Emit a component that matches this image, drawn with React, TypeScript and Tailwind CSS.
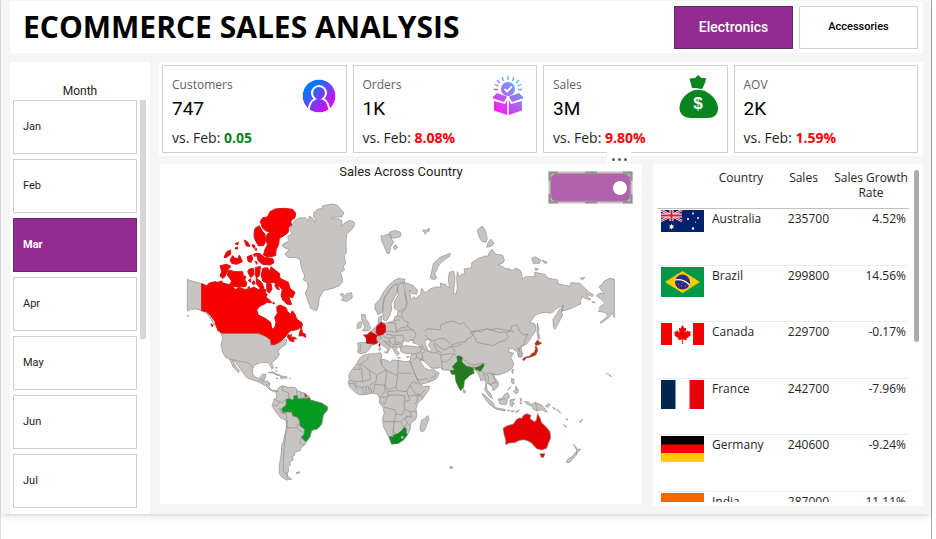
import React from "react";

type Part = [region: keyof typeof regions, points: string];

/* Offsets of the map regions inside the world drawing. */
const regions = {
  arctic: [0, 0],
  europe: [450, 0],
  siberia: [870, -135],
  america: [0, 405],
  africa: [450, 405],
  pacific: [870, 405],
};

function outline(parts: Part[], close = true) {
  const points = parts.flatMap(([region, text]) => {
    const [dx, dy] = regions[region];
    return text.split(" ").map((pair) => {
      const [x, y] = pair.split(",").map(Number);
      return `${x + dx},${y + dy}`;
    });
  });
  return `M${points.join("L")}${close ? "Z" : ""}`;
}

function shapes(region: keyof typeof regions, list: string[], close = true) {
  return list.map((points) => outline([[region, points]], close)).join("");
}

const eurasia = outline([
  ["europe", "222,262 232,265 250,272 262,285 260,298 245,295 238,285 240,298 243,314 252,305 255,312 272,298 275,280 282,290 288,292 300,282 320,275 332,278 330,265 345,268 358,280 355,250 358,232 370,228 375,245 373,270 370,295 378,297 382,280 380,250 382,230 388,245 395,237 405,238 402,222 425,218 425,203 445,190 460,185"],
  ["siberia", "45,318 55,318 58,305 67,298 75,312 98,316 103,330 100,338 85,345 98,350 105,355 122,358 125,363 138,355 150,360 154,368 158,388 165,380 195,380 194,367 225,373 235,385 262,389 265,402 300,409 303,398 330,400 345,415 355,425 370,434 367,440 350,432 354,443 363,447 356,450 337,440 330,455 333,462 318,468 305,475 290,480 275,483 280,465 262,475 255,478 248,487 235,490 235,487 215,488 195,496 180,518 192,520 198,528 196,543 185,560 170,582 152,592"],
  ["pacific", "146,60 154,68 156,80 145,80 142,65 132,60 128,55 117,56 116,66 131,70 122,83 131,98 128,112 115,124 92,133 82,135 72,132 73,142 84,155 85,168 76,178 68,182 68,172 60,165 52,160 49,165 52,182 62,190 67,206 58,200 50,188 44,180 48,160 44,148 33,153 28,138 18,120 8,117"],
  ["africa", "430,128 395,135 365,130 358,121 340,120 331,113 315,115 303,114 290,100 275,90 270,92 277,104 285,115 298,121 308,117 328,130 318,147 300,155 275,163 268,160 258,140 250,118 244,103 240,93 242,80 246,72 225,70 213,65 210,52 224,47 240,48 260,50 272,52 262,43 248,38 252,32 240,30 235,36 225,32 218,38 217,48 205,52 198,58 208,70 202,77 195,68 185,50 170,40 160,30 165,38 184,51 180,56 174,65 170,54 155,44 147,35 138,42 122,48 118,58 108,68 92,71 83,67 85,50 82,39 95,37 111,38 108,22 100,15 113,12 122,4"],
  ["europe", "135,398 145,385 145,368 155,362 154,380 167,385 190,378 195,365 203,362 203,350 218,347 228,340 231,325 224,295 228,285"],
]);

const neutral = [
  eurasia,
  outline([
    ["arctic", "308,148 328,137 322,125 336,115 328,103 340,85 345,75 360,69 375,68 385,77 388,63 398,70 405,82 408,72 400,66 402,52 414,42 428,41 427,33 455,27"],
    ["europe", "12,28 22,31 42,54 35,66 10,67 3,71 28,72 36,78 35,95 42,85 60,76 73,82 73,93 62,107 50,117 48,145 49,175 42,182 47,205 40,215 44,225 32,232 36,248 38,260 28,272 12,279 0,282"],
    ["arctic", "430,287 418,308 415,335 410,346 402,345 392,340 384,318 376,295 384,275 383,262 370,255 374,243 365,220 360,195 350,188 325,187 314,177 328,165 308,155"],
  ]),
  shapes("arctic", [
    "22,253 35,258 50,262 65,266 65,347 45,341 35,345 30,340 25,349 22,346",
    "65,347 80,352 92,368 104,390 98,380 86,362 76,352",
    "22,362 25,360 24,365",
  ]),
  shapes("europe", [
    "30,298 38,295 43,302 50,296 65,293 67,308 50,320 34,315 40,308",
    "153,122 162,123 170,118 179,118 185,132 191,142 182,155 178,175 171,175 163,155 155,138",
    "178,112 195,106 212,112 212,124 195,130 183,127",
    "190,155 197,149 203,157 195,165",
    "277,106 288,105 298,100 298,108 290,110 286,118 282,110",
    "361,175 358,185 342,195 328,208 320,225 314,235 320,250 312,254 300,248 305,230 310,206 330,187",
    "442,105 457,93 465,105 472,130 468,142 455,138 447,125",
    "95,358 102,358 108,362 106,370 115,382 122,398 117,407 97,408 105,397 100,385 95,375",
    "82,387 90,379 96,384 92,398 82,401",
    "135,342 135,328 150,312 160,292 175,272 190,258 205,250 225,253 222,262 208,264 195,268 178,285 162,310 158,335 158,350 145,360",
    "203,268 190,270 178,286 163,310 159,335 158,352 160,375 170,377 180,360 185,342 183,325 195,305 202,292",
    "207,267 219,263 225,290 231,320 225,342 205,347 193,340 193,320 205,300 202,282",
  ]),
  shapes("siberia", [
    "50,292 53,280 62,267 72,280 65,288",
    "185,325 195,320 212,330 208,340 190,340",
    "216,330 232,337 225,341",
    "195,355 206,357 197,362",
    "330,385 345,382 338,389",
    "280,467 275,487 278,495 265,520 255,538 250,530 249,508 262,490 268,478",
    "433,388 433,503 428,490 415,504 392,520 390,518 412,499 409,488 385,484 390,478 388,472 405,460 390,445 379,438 388,430 402,431 387,410 398,402 402,393 420,385",
    "202,520 207,540 205,547 210,565 204,568 201,545",
    "365,454 376,458 371,459",
  ]),
  shapes("america", [
    "125,10 232,10 255,18 270,28 272,45 285,45 300,38 315,28 320,30 318,43 305,52 294,63 298,73 290,86 275,98 280,112 276,118 268,103 262,98 245,97 232,102 225,104 218,114 218,130 224,140 235,145 244,140 246,133 257,132 255,147 248,152 263,154 270,160 268,170 273,180 285,181 293,184 285,186 270,180 258,168 240,158 225,152 200,143 190,130 178,112 165,95 158,90 165,105 178,122 176,128 160,112 149,88 138,83 128,68 123,45 128,25 124,12",
    "288,185 297,172 308,167 325,172 345,172 355,183 375,190 387,200 392,210 410,215 425,219 442,230 442,240 430,255 425,283 412,297 395,301 390,320 378,337 374,345 364,350 362,360 343,368 345,375 337,380 340,390 329,397 332,404 325,410 325,425 320,432 325,440 335,447 320,450 308,443 298,432 298,405 304,370 305,345 310,335 318,300 320,280 318,272 300,262 285,242 276,228 282,208 290,202",
    "265,128 278,125 290,132 302,136 290,136 278,129",
    "302,138 320,140 322,144 311,145 302,145",
    "348,428 360,425 357,430 349,430",
    "288,145 294,145 291,147", "328,144 332,145 330,147",
    "286,112 292,113 289,116", "288,121 291,124 289,126",
  ]),
  shapes("africa", [
    "97,77 115,72 135,71 152,68 156,78 153,87 168,90 182,97 186,90 205,91 225,95 240,93 245,103 243,107 252,127 260,145 266,160 280,170 298,168 296,180 280,203 263,220 258,235 261,258 257,268 243,280 240,300 232,315 222,328 205,340 185,342 180,330 172,312 160,290 158,265 163,248 158,230 148,218 149,205 142,192 125,190 105,194 88,194 75,187 60,172 54,158 58,148 56,137 65,120 78,105 87,88",
    "272,285 275,270 284,267 293,256 297,268 288,290 283,302 274,305 270,298",
    "400,178 407,182 405,189 400,187",
    "147,54 152,54 151,60 147,61",
    "163,66 174,65 172,70",
    "202,82 212,84 203,84", "230,81 238,79 233,84",
    "360,410 367,410 367,415 360,415",
  ]),
  shapes("pacific", [
    "310,343 317,350 322,358 332,357 325,366 319,370 320,360",
    "318,366 322,371 310,385 298,398 289,397 292,389 308,378",
    "163,215 175,215 182,225 195,217 215,225 222,233 232,247 215,239 200,243 188,236 188,230 170,222",
    "84,207 95,205 105,192 113,188 119,200 113,208 108,224 90,222",
    "35,190 45,196 60,210 72,222 75,235 60,225 48,210",
    "75,233 90,235 106,239 105,243 78,238",
    "120,210 136,207 128,214 134,222 127,220 128,229 121,228",
    "124,145 132,148 132,162 125,158",
    "137,168 145,180 145,187 137,191 130,184 137,180",
    "125,120 130,117 128,131",
    "143,55 153,52 158,76 150,82 144,78 149,68",
    "112,240 120,241 115,243", "122,243 133,243 128,245", "136,246 148,240 143,246",
    "150,205 154,206 153,215", "113,180 122,170 117,178", "150,218 156,219 152,222",
    "226,229 236,220 241,225 233,232", "248,231 256,237 252,238", "260,237 272,249 266,244",
    "280,284 290,291 285,290", "288,264 293,270 291,270", "328,275 338,268 332,276",
    "408,129 412,132 410,133", "415,133 425,140 420,138",
  ]),
].join("");

const borders = [
  shapes("europe", [
    "220,345 214,360 222,377 235,382 232,395 250,405 256,412 258,423 245,438",
    "285,410 290,402 308,402 330,405 332,390 350,382 370,378 390,388 400,382 425,410 433,412 422,428 410,432 408,440 385,443 365,450 345,432 330,430 310,438 292,430 285,420",
    "425,410 450,405 470,402 480,405 498,400 528,405 552,410",
    "200,362 215,368", "192,376 210,375", "196,385 200,410 210,400 230,395", "175,382 198,385",
    "165,412 180,408 200,412", "170,418 195,422 218,420", "160,425 178,430 195,425 195,440 215,445",
    "178,430 180,445", "165,440 178,442", "218,420 222,432 215,440", "145,422 155,428 145,435", "140,418 145,422",
    "200,410 225,405 250,405", "192,440 195,448 212,447", "130,402 140,402 138,412",
  ], false),
  shapes("siberia", [
    "0,548 15,543 35,545 50,535 65,540 90,548 105,545 115,560 105,572 90,575 70,587 45,582 20,577 15,562 0,548",
    "108,546 120,545 125,528 140,524 150,545 162,555 175,552 165,568 162,583 150,590",
  ], false),
  shapes("america", [
    "149,88 165,90 180,95 198,96 210,102 220,115", "236,152 246,148 248,142", "250,152 246,160", "258,165 268,160",
    "308,170 308,182 325,188 327,208", "350,180 350,190 355,205", "362,187 364,203", "283,208 298,215 305,218 318,208",
    "280,225 290,228 300,215", "305,240 298,235 306,250 318,250 322,270 320,290 328,295", "318,272 322,290 316,318 312,360 310,400 310,425 322,432",
    "322,292 335,294 350,292 360,302 370,308", "350,292 355,282 360,288", "362,325 360,340 372,345", "322,430 322,445",
  ], false),
  shapes("africa", [
    "115,78 113,88 92,102 80,105", "92,102 118,120 140,135 168,120 155,105 150,85", "155,105 155,90", "70,118 90,118 90,105",
    "95,115 98,155 75,155 60,150", "118,120 122,148 98,155", "140,135 138,155 120,165", "168,120 170,128 165,165 150,165 135,162", "168,120 203,138 205,92",
    "205,130 245,130", "203,138 200,160 198,172 205,182 230,185 240,165 250,155 262,162", "165,165 172,180 200,170",
    "56,160 72,160 80,180", "75,155 80,170 95,172 103,192", "95,172 115,170 120,190", "108,172 108,190", "120,170 128,190", "135,162 130,188",
    "165,165 165,185 150,200", "150,203 175,200 172,185", "175,200 178,195 200,195 225,198 222,220 225,238 215,255 198,252 195,240 178,235 162,232",
    "172,185 200,182", "150,215 165,222 170,205", "230,185 235,198 262,195 280,200", "240,165 255,190 270,195 285,180", "262,195 262,215 255,222", "235,198 240,210 225,215",
    "225,238 240,245 258,245", "198,252 192,275 160,275", "192,275 212,275 225,265 235,260 225,258", "192,275 190,305 200,312", "190,298 188,320 178,320",
    "212,275 222,292 232,280 225,265", "235,258 245,262 240,245", "232,280 240,285", "222,292 230,295 228,312",
    "246,72 270,68 275,55", "258,72 260,82 248,92", "260,82 280,92 275,70 285,65", "275,55 290,62 305,68 320,68 332,75 335,95 338,120",
    "278,80 270,90", "335,95 350,95 365,82 370,72 380,75", "332,75 350,72 365,70", "312,35 325,50 345,60 360,50 380,48 395,42", "310,40 320,62 335,68",
    "360,50 375,60 370,72", "300,155 290,145 272,150 262,148", "300,145 315,140 318,128", "398,85 415,100 432,105 455,100 470,102",
    "430,107 432,130", "275,42 280,52 268,50", "178,35 190,45 202,42", "186,50 200,50", "92,42 90,68",
  ], false),
  shapes("pacific", [
    "20,122 35,120 42,135 48,150", "42,128 55,140 55,158 65,165", "50,130 65,130 78,135", "65,130 78,155 68,160", "60,165 70,158 82,160",
    "197,218 200,243", "90,210 108,205", "145,60 150,58",
  ], false),
].join("");

const canada = [
  shapes("arctic", [
    "65,266 80,272 88,264 105,260 112,262 125,258 130,265 145,268 160,275 165,284 178,278 190,282 205,284 222,276 235,284 245,278 258,285 255,292 262,298 258,306 262,315 258,325 240,333 230,345 235,360 255,370 272,382 275,400 281,402 286,392 288,382 284,368 292,355 290,335 300,330 318,338 323,350 332,358 337,347 345,358 350,372 366,384 367,393 355,402 345,405 330,408 320,420 310,432 298,441 285,448 274,448 272,434 255,422 235,414 125,414 108,393 105,380 92,362 80,350 65,347",
    "241,80 248,68 262,66 270,50 285,42 312,40 338,43 347,55 345,68 332,78 335,90 325,98 325,112 312,122 298,130 296,148 288,165 287,182 262,186 250,180 255,163 262,150 258,128 262,116 272,112 258,108 248,100",
    "225,100 238,92 245,105 255,118 257,140 250,152 235,152 223,130 222,115",
    "228,175 240,176 255,188 278,190 282,203 270,210 248,208 235,198",
    "248,220 262,218 270,228 273,215 285,225 298,235 300,250 325,262 330,280 345,292 338,308 326,305 335,328 322,328 308,315 303,300 307,285 295,270 280,262 262,265 248,258 244,240",
    "145,225 165,230 188,230 190,242 198,245 194,255 200,262 198,274 175,277 148,270 155,258 142,240",
    "120,212 140,208 153,214 143,225 135,245 128,250 120,243 125,230",
    "150,195 158,182 165,190 175,190 178,180 183,190 187,200 170,208 155,205",
    "132,187 140,170 152,165 152,178 138,188",
    "202,185 215,180 218,192 212,203 204,198", "219,178 228,176 225,185", "225,198 232,202 230,208",
    "165,146 175,142 173,150", "166,158 172,156 173,162 167,162",
    "193,135 203,141 210,154 199,153", "216,149 224,151 225,161 219,157", "225,163 231,161 228,167",
    "203,230 208,222 220,220 221,240 212,248", "226,218 241,214 239,240 230,250 225,238",
    "228,250 238,256 245,263 252,278 242,282 230,267", "260,266 273,266 276,282 268,294 261,289",
    "205,256 212,252 212,262", "216,262 222,257 226,265 219,269", "202,280 208,274 210,282",
    "262,309 272,318 275,323 263,323", "279,321 284,325 279,327", "284,270 292,268 298,284 290,281",
    "93,386 99,390 97,396", "110,396 122,406 124,414 114,407",
    "364,396 367,412 377,419 377,427 368,422 357,423 359,413",
    "325,418 330,422 335,418 332,426 345,427 350,432 340,432 342,440 331,438 322,426",
  ]),
].join("");

const brazil =
  "305,235 318,225 318,208 330,205 335,210 342,206 340,198 352,195 354,206 370,204 382,205 387,200 392,210 410,215 425,219 442,230 442,240 430,255 425,283 412,297 395,301 390,320 378,337 363,322 372,312 373,298 360,288 358,272 352,262 338,258 335,247 322,246 308,248";

function WorldMap() {
  return (
    <svg
      viewBox="-60 -93 1446 1020"
      className="block h-auto w-full"
      role="img"
      aria-label="Sales across country map"
      strokeLinejoin="round"
    >
      <g stroke="#8f8c8a" strokeWidth="2">
        <path d={neutral} fill="#c8c4c1" />
        <path d={borders} fill="none" />
        <path d={shapes("africa", ["284,32 296,28 302,35 295,45 304,58 302,65 295,62 288,48"])} fill="#fff" />
        <path d={canada} fill="#f80000" stroke="#d81414" strokeWidth="3" />
        <path d={shapes("america", [brazil])} fill="#069a22" />
        <path d={shapes("america", ["373,190 383,198 376,203"])} fill="#c80d18" />
        <path
          d={shapes("africa", [
            "102,16 112,15 122,5 130,10 142,16 138,26 143,38 132,42 110,40 109,24",
            "147,42 150,41 150,49 147,48",
          ])}
          fill="#d20008"
          stroke="#b80c12"
        />
        <path
          d={shapes("europe", ["140,395 150,385 152,382 166,390 167,408 160,418 145,422 138,412"])}
          fill="#d80007"
          stroke="#b80c12"
        />
        <path
          d={shapes("africa", [
            "361,122 375,120 367,110 376,100 383,94 380,80 386,77 397,82 395,95 408,108 428,113 432,130 420,135 403,152 401,172 392,182 385,170 378,155 375,133 365,133",
            "438,120 434,113 446,110 460,101 462,108 450,125 444,118",
          ])}
          fill="#247b1d"
          stroke="#3f7a38"
        />
        <path
          d={shapes("africa", ["178,320 190,322 192,314 202,312 213,304 222,293 228,296 228,308 232,313 222,328 205,340 185,342"])}
          fill="#078a20"
          stroke="#3f7a48"
        />
        <path d={shapes("africa", ["212,322 217,317 222,321 217,327"])} fill="#c8c4c1" />
        <path
          d={shapes("pacific", [
            "158,87 165,82 180,78 186,70 193,68 197,55 195,50 200,50 203,62 197,75 182,81 170,83 161,92",
            "195,40 203,30 208,36 215,39 205,45 197,46",
          ])}
          fill="#ad3512"
          stroke="#a04428"
        />
        <path
          d={shapes("pacific", [
            "99,295 110,288 130,282 140,268 148,264 155,265 161,255 171,251 183,256 180,266 193,275 199,271 203,250 210,264 215,278 228,290 240,305 242,325 235,340 230,355 215,360 200,356 190,345 184,338 172,332 160,329 145,332 135,338 118,339 107,344 107,330 102,312",
            "210,371 225,371 220,383 213,381",
          ])}
          fill="#e40005"
        />
      </g>
    </svg>
  );
}

function CustomerIcon() {
  return (
    <svg viewBox="0 0 34 34" className="h-[34px] w-[34px]" aria-hidden="true">
      <defs>
        <linearGradient id="person" x1="0.1" y1="0.2" x2="0.8" y2="0.9">
          <stop offset="0.15" stopColor="#0a75ff" />
          <stop offset="1" stopColor="#e800f0" />
        </linearGradient>
        <clipPath id="disc">
          <circle cx="17" cy="17" r="16.5" />
        </clipPath>
      </defs>
      <g clipPath="url(#disc)">
        <circle cx="17" cy="17" r="16.5" fill="url(#person)" />
        <path
          d="M6.500 34C6.500 26 9 21.500 13 19.800A7 7 0 1 1 21 19.800C25 21.500 27.500 26 27.500 34"
          fill="none"
          stroke="#fff"
          strokeWidth="2"
        />
      </g>
    </svg>
  );
}

function OrderIcon() {
  return (
    <svg viewBox="0 0 34 40" className="h-[40px] w-[34px]" aria-hidden="true">
      <defs>
        <linearGradient id="box" gradientUnits="userSpaceOnUse" x1="5" y1="36" x2="29" y2="6">
          <stop offset="0" stopColor="#ff18f5" />
          <stop offset="1" stopColor="#4cbdf8" />
        </linearGradient>
      </defs>
      <g fill="url(#box)">
        <circle cx="17" cy="14" r="7" />
        <path d="M6 18l10 3.500-3 5.500L1 23ZM28 18l-10 3.500 3 5.500L33 23ZM3 26l11 3 2.200-4V40L3 35.500ZM31 26l-11 3-2.200-4V40L31 35.500Z" />
      </g>
      <path d="M17 1v4M11 2l1.500 4M23 2l-1.500 4M6 5l3 3.200M28 5l-3 3.200M3.500 9.500l4 1.500M30.500 9.500l-4 1.500M3 14.500h4M31 14.500h-4" stroke="url(#box)" strokeWidth="1.300" />
      <path d="m13.500 14 2.500 2.500 5-5" fill="none" stroke="#fff" strokeWidth="1.800" />
    </svg>
  );
}

function MoneyBagIcon() {
  return (
    <svg viewBox="0 0 40 43" className="h-[43px] w-[40px]" aria-hidden="true">
      <g fill="#08851e">
        <path d="M13 13 10.500 3.500 16 3 19 0l3.500 3L27 3l-1 5-3 6Z" />
        <path d="M13 16Q19 13 26 16C34 20 39 27 39 33C39 40 35 43 28 43H12C5 43 .5 39 .5 33C.5 26 6 19 13 16Z" />
      </g>
      <path d="M10 15.500Q15 13.500 18 14Q23 15 27.500 14.500" fill="none" stroke="#fff" strokeWidth="1.200" />
      <text x="19" y="34" textAnchor="middle" fill="#fff" fontSize="17" fontWeight="700" fontFamily="Liberation Sans, sans-serif">
        $
      </text>
    </svg>
  );
}

const star = "M0-3 .7-1 2.700-1.500 1.400.2 2.500 2 .6 1.500 0 3.200-.6 1.500-2.500 2-1.400.2-2.700-1.500-.7-1Z";

const flags: Record<string, React.ReactNode> = {
  Australia: (
    <svg viewBox="0 0 43 22" className="block h-[22px] w-[43px]" aria-hidden="true">
      <path d="M0 0h43v22H0Z" fill="#00216b" />
      <path d="m0 0 21 11M21 0 0 11" stroke="#fff" strokeWidth="2.500" />
      <path d="m0 0 21 11M21 0 0 11" stroke="#e4002b" strokeWidth="1" />
      <path d="M10.500 0v11M0 5.500h21" stroke="#fff" strokeWidth="4" />
      <path d="M10.500 0v11M0 5.500h21" stroke="#f0102c" strokeWidth="2" />
      <g fill="#fff">
        <path d={star} transform="translate(10.500 16.500)" />
        <circle cx="32" cy="3.500" r="1" />
        <circle cx="27" cy="9" r="1" />
        <circle cx="37" cy="8" r="1" />
        <circle cx="34.500" cy="12" r=".6" />
        <circle cx="32" cy="18.500" r="1.200" />
      </g>
    </svg>
  ),
  Brazil: (
    <svg viewBox="0 0 43 30" className="block h-[30px] w-[43px]" aria-hidden="true">
      <path d="M0 0h43v30H0Z" fill="#009846" />
      <path d="m4 15 17.500-11L39 15 21.500 26Z" fill="#ffcc00" />
      <circle cx="21.500" cy="15" r="7.500" fill="#2e2a80" />
      <path d="M14 13Q22 11.500 28.500 18" fill="none" stroke="#fff" strokeWidth="1.200" />
      <path d="M17 17.500h1M20 19h1M24 19h1M21 16h1" stroke="#8f91c4" strokeWidth=".8" />
    </svg>
  ),
  Canada: (
    <svg viewBox="0 0 43 22" className="block h-[22px] w-[43px]" aria-hidden="true">
      <path d="M0 0h43v22H0Z" fill="#fff" />
      <path d="M0 0h11v22H0ZM32 0h11v22H32Z" fill="#f40000" />
      <path
        d="m21.500 2 2 3.500 1.800-.8-.8 5 2.500-2.500.8 1.600 2.200-.4-.9 2.500 1 1-4.600 3.500.4 1.600-4-.5V21h-.8v-4.500l-4 .5.400-1.600L13 11.900l1-1-.9-2.500 2.200.4.800-1.600 2.500 2.500-.8-5 1.800.8Z"
        fill="#f40000"
      />
    </svg>
  ),
  France: (
    <svg viewBox="0 0 43 29" className="block h-[29px] w-[43px]" aria-hidden="true">
      <path d="M0 0h14.500v29H0Z" fill="#00264f" />
      <path d="M28.500 0H43v29H28.500Z" fill="#e60008" />
    </svg>
  ),
  Germany: (
    <svg viewBox="0 0 43 26" className="block h-[26px] w-[43px]" aria-hidden="true">
      <path d="M0 0h43v9H0Z" />
      <path d="M0 8.500h43v9H0Z" fill="#f80000" />
      <path d="M0 17h43v9H0Z" fill="#ffce00" />
    </svg>
  ),
  India: (
    <svg viewBox="0 0 43 29" className="block h-[29px] w-[43px]" aria-hidden="true">
      <path d="M0 0h43v10H0Z" fill="#ff6200" />
      <path d="M0 19h43v10H0Z" fill="#138808" />
      <circle cx="21.500" cy="14.500" r="4" fill="none" stroke="#000080" />
    </svg>
  ),
};

const months = ["Jan", "Feb", "Mar", "Apr", "May", "Jun", "Jul"];

const cards = [
  { label: "Customers", value: "747", change: "0.05", good: true, icon: <CustomerIcon />, place: "right-[10px] top-[13px]" },
  { label: "Orders", value: "1K", change: "8.08%", good: false, icon: <OrderIcon />, place: "right-[11px] top-[9px]" },
  { label: "Sales", value: "3M", change: "9.80%", good: false, icon: <MoneyBagIcon />, place: "right-[8px] top-[9px]" },
  { label: "AOV", value: "2K", change: "1.59%", good: false, icon: null, place: "" },
];

const rows = [
  ["Australia", "235700", "4.52%"],
  ["Brazil", "299800", "14.56%"],
  ["Canada", "229700", "-0.17%"],
  ["France", "242700", "-7.96%"],
  ["Germany", "240600", "-9.24%"],
  ["India", "287000", "11.11%"],
];

function Selection() {
  return (
    <svg viewBox="0 0 85 33" className="pointer-events-none absolute inset-0 h-full w-full" aria-hidden="true" fill="none">
      <path d="M1.500 1.500h82v30h-82Z" stroke="#c4c2c0" strokeWidth="2" />
      <path
        d="M2 10V2h8M75 2h8v8M83 23v8h-8M10 31H2v-8M37 2h12M37 31h12"
        stroke="#969492"
        strokeWidth="3"
      />
    </svg>
  );
}

export default function App() {
  return (
    <div className="flex min-h-screen bg-white font-['Open_Sans',sans-serif] text-[#252423]">
      <div className="mr-1 flex-1 border-x border-l-[#e1dfdd] border-r-[#a8a8a8]">
        <main className="bg-[#f5f5f5] pt-px pr-[8px] pl-[9px] shadow-md">
          <header className="flex h-[52px] items-center justify-between bg-white pr-[5px] pl-[13px]">
            <h1 className="text-[30px] leading-[52px] font-bold whitespace-nowrap text-black">ECOMMERCE SALES ANALYSIS</h1>
            <div className="flex gap-[6px] font-[Roboto,sans-serif]">
              <button className="h-[43px] w-[119px] border border-[#5f2a61] bg-[#942b90] text-[14px] font-medium text-white">
                Electronics
              </button>
              <button className="h-[43px] w-[119px] border border-[#d0d0d0] bg-white text-[11px] font-medium text-black">
                Accessories
              </button>
            </div>
          </header>

          <div className="flex gap-[9px] pt-[9px]">
            <aside className="h-[452px] w-[140px] shrink-0 bg-white pt-[20px] pl-[3px] font-[Roboto,sans-serif]">
              <h2 className="pr-[3px] text-center text-[12px] leading-[18px]">Month</h2>
              <div className="flex gap-[3px]">
                <div className="flex w-[124px] flex-col gap-[5px]">
                  {months.map((month) => (
                    <button
                      key={month}
                      className={
                        month === "Mar"
                          ? "h-[54px] border border-[#6b2a6c] bg-[#942b90] pl-[9px] text-left text-[11px] font-bold text-white"
                          : "h-[54px] border border-[#cfcfcf] bg-white pl-[9px] text-left text-[11px]"
                      }
                    >
                      {month}
                    </button>
                  ))}
                </div>
                <div className="h-[239px] w-[6px] bg-[#d6d6d6]" />
              </div>
            </aside>

            <div className="min-w-0 flex-1">
              <section className="grid h-[94px] grid-cols-4 gap-[6px] bg-white pt-[3px] pr-[5px] pb-[3px] pl-[3px]">
                {cards.map((card) => (
                  <article key={card.label} className="relative border border-[#d0d0d0] pt-[10px] pl-[9px]">
                    <h3 className="text-[12px] leading-[18px] text-[#605e5c]">{card.label}</h3>
                    <p className="font-[Roboto,sans-serif] text-[19px] leading-[30px] text-black">{card.value}</p>
                    <p className="pt-[2px] text-[14px] leading-[24px] whitespace-nowrap">
                      vs. Feb:{" "}
                      <b className={card.good ? "text-[#08851e]" : "text-[#ff0000]"}>{card.change}</b>
                    </p>
                    <div className={`absolute ${card.place}`}>{card.icon}</div>
                  </article>
                ))}
              </section>

              <div className="flex gap-[11px] pt-[8px]">
                <section className="relative ml-px h-[340px] min-w-0 flex-1 bg-white">
                  <h2 className="absolute inset-x-0 top-0 text-center font-[Roboto,sans-serif] text-[13px] leading-[16px]">
                    Sales Across Country
                  </h2>
                  <WorldMap />
                  <button
                    aria-label="More options"
                    className="absolute -top-[14px] right-[11px] flex h-[18px] w-[24px] items-center justify-center gap-[3px] bg-white"
                  >
                    <span className="h-[3px] w-[3px] rounded-full bg-[#605e5c]" />
                    <span className="h-[3px] w-[3px] rounded-full bg-[#605e5c]" />
                    <span className="h-[3px] w-[3px] rounded-full bg-[#605e5c]" />
                  </button>
                  <div className="absolute top-[7px] right-[9px] h-[33px] w-[85px] p-[2px]">
                    <button
                      role="switch"
                      aria-checked="true"
                      aria-label="Map view"
                      className="flex h-full w-full items-center justify-end rounded-[8px] bg-[#b062ac] pr-[4px]"
                    >
                      <span className="h-[14px] w-[14px] rounded-full bg-white" />
                    </button>
                    <Selection />
                  </div>
                </section>

                <section className="flex h-[342px] w-[270px] shrink-0 justify-between bg-white pr-[4px] pl-[4px]">
                  <div className="h-[338px] w-[252px] overflow-hidden">
                    <table className="w-full table-fixed border-collapse text-[12px] leading-[15px]">
                      <colgroup>
                        <col className="w-[51px]" />
                        <col className="w-[66px]" />
                        <col className="w-[59px]" />
                        <col className="w-[76px]" />
                      </colgroup>
                      <thead>
                        <tr className="h-[44px] border-b border-[#c0c0c0] align-top">
                          <th aria-label="Flag" />
                          <th className="pt-[6px] font-normal">Country</th>
                          <th className="pt-[6px] font-normal">Sales</th>
                          <th className="pt-[6px] font-normal">Sales Growth Rate</th>
                        </tr>
                      </thead>
                      <tbody>
                        {rows.map(([country, sales, growth]) => (
                          <tr key={country} className="border-b border-[#ececec] align-top odd:h-[57px] even:h-[56px]">
                            <td className="pt-px pl-[4px]">{flags[country]}</td>
                            <td className="pt-[2px] pl-[4px]">{country}</td>
                            <td className="pt-[2px] pr-[4px] text-right">{sales}</td>
                            <td className="pt-[2px] pr-[3px] text-right">{growth}</td>
                          </tr>
                        ))}
                      </tbody>
                    </table>
                  </div>
                  <div className="mt-[6px] h-[172px] w-[5px] rounded-full bg-[#adadad]" />
                </section>
              </div>
            </div>
          </div>
        </main>
      </div>
    </div>
  );
}
